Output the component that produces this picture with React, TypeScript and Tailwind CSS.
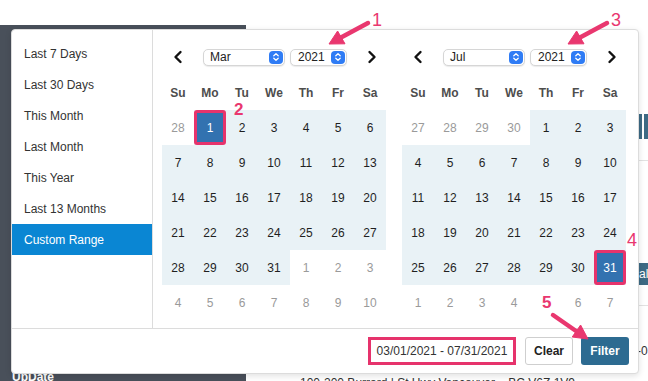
import React from 'react';

type Day = { d: number; off?: boolean; sel?: boolean };

const range = (a: number, b: number) => Array.from({ length: b - a + 1 }, (_, i) => a + i);

const presets = ['Last 7 Days', 'Last 30 Days', 'This Month', 'Last Month', 'This Year', 'Last 13 Months', 'Custom Range'];
const weekdays = ['Su', 'Mo', 'Tu', 'We', 'Th', 'Fr', 'Sa'];

const march: Day[] = [
  ...[28].map((d) => ({ d, off: true })),
  ...range(1, 31).map((d) => ({ d, sel: d === 1 })),
  ...range(1, 10).map((d) => ({ d, off: true })),
];

const july: Day[] = [
  ...range(27, 30).map((d) => ({ d, off: true })),
  ...range(1, 31).map((d) => ({ d, sel: d === 31 })),
  ...range(1, 7).map((d) => ({ d, off: true })),
];

const Chevron = ({ dir }: { dir: 'l' | 'r' }) => (
  <svg width="10" height="14" viewBox="0 0 10 14">
    <path
      d={dir === 'l' ? 'M7.5 2 L2.5 7 L7.5 12' : 'M2.5 2 L7.5 7 L2.5 12'}
      fill="none"
      stroke="#111"
      strokeWidth="2.4"
      strokeLinecap="round"
      strokeLinejoin="round"
    />
  </svg>
);

const Select = ({ value, w, pl }: { value: string; w: string; pl: string }) => (
  <div className={`${w} ${pl} h-[17px] flex items-center justify-between pr-[1px] bg-white border border-[#d6d6d6] rounded-[5px] shadow-[0_1px_1px_rgba(0,0,0,0.08)]`}>
    <span className="text-[12px] text-[#222] leading-none">{value}</span>
    <span className="w-[14px] h-[13px] rounded-[4px] bg-[#2f7cf5] flex items-center justify-center">
      <svg width="8" height="10" viewBox="0 0 8 10">
        <path d="M1.8 3.8 L4 1.8 L6.2 3.8 M1.8 6.2 L4 8.2 L6.2 6.2" fill="none" stroke="#fff" strokeWidth="1.3" strokeLinecap="round" strokeLinejoin="round" />
      </svg>
    </span>
  </div>
);

const Calendar = ({ month, days }: { month: string; days: Day[] }) => (
  <div className="w-[224px]">
    <div className="h-[24px] flex items-center">
      <div className="w-[32px] flex justify-center"><Chevron dir="l" /></div>
      <div className="ml-[9px]"><Select value={month} w="w-[82px]" pl="pl-[6px]" /></div>
      <div className="ml-[5px]"><Select value="2021" w="w-[57px]" pl="pl-[7px]" /></div>
      <div className="flex-1" />
      <div className="w-[28px] flex justify-center"><Chevron dir="r" /></div>
    </div>
    <div className="mt-[6px] grid grid-cols-7">
      {weekdays.map((w) => (
        <div key={w} className="h-[35px] flex items-center justify-center text-[12px] font-bold text-[#4d4d4d]">{w}</div>
      ))}
      {days.map((day, i) => (
        <div
          key={i}
          className={`h-[35px] flex items-center justify-center text-[12px] ${day.off ? 'text-[#9a9a9a]' : 'text-[#1f1f1f] bg-[#e9f2f6]'}`}
        >
          {day.sel ? (
            <div className="w-full h-full flex items-center justify-center bg-[#3272b0] border-[3px] border-[#e6336c] rounded-[3px] text-white">{day.d}</div>
          ) : (
            day.d
          )}
        </div>
      ))}
    </div>
  </div>
);

export default function App() {
  return (
    <div className="relative w-[648px] h-[381px] overflow-hidden bg-white font-['Liberation_Sans',Arial,sans-serif]">
      {/* page behind the popup */}
      <div className="absolute left-0 top-[25px] w-[246px] bottom-0 bg-[#49505a]" />
      <div className="absolute left-[12px] top-[371px] text-[12px] font-bold text-white leading-none">UpDate</div>
      <div className="absolute left-[639px] top-[114px] flex gap-[2px]">
        <div className="w-[3px] h-[25px] bg-[#3d6a84]" />
        <div className="w-[4px] h-[25px] bg-[#3d6a84]" />
      </div>
      <div className="absolute left-[638px] top-[160px] w-[10px] h-px bg-[#e2e2e2]" />
      <div className="absolute left-[638px] top-[263px] w-[12px] h-[22px] bg-[#3d6a84] text-white text-[12px] leading-[22px] pl-[1px]">al</div>
      <div className="absolute left-[638px] top-[305px] w-[10px] h-px bg-[#e2e2e2]" />
      <div className="absolute left-[637px] top-[342px] text-[12px] text-[#333]">-0</div>
      <div className="absolute left-[300px] top-[374px] text-[12px] text-[#333] whitespace-nowrap">100-200 Burrard | St Hwy Vancouver&nbsp;&nbsp;&nbsp;&nbsp;BC V6Z 1V9</div>

      {/* date range popup */}
      <div className="absolute left-[11px] top-[29px] w-[628px] bg-white border border-[#dcdcdc] rounded-[4px] shadow-[0_2px_6px_rgba(0,0,0,0.12)]">
        <div className="flex">
          <div className="w-[141px] border-r border-[#dcdcdc] pt-[8px]">
            {presets.map((p) => (
              <div
                key={p}
                className={`h-[31px] flex items-center pl-[12px] text-[12px] ${p === 'Custom Range' ? 'bg-[#0a86d3] text-white' : 'text-[#333]'}`}
              >
                {p}
              </div>
            ))}
          </div>
          <div className="flex gap-[16px] pl-[9px] pt-[15px] pb-[8px]">
            <Calendar month="Mar" days={march} />
            <Calendar month="Jul" days={july} />
          </div>
        </div>
        <div className="h-[45px] border-t border-[#dcdcdc] flex items-center justify-end pr-[9px] gap-[8px]">
          <div className="w-[148px] h-[28px] border-[3px] border-[#e6336c] bg-white flex items-center justify-center text-[12px] text-[#333]">
            03/01/2021 - 07/31/2021
          </div>
          <div className="ml-[1px] w-[48px] h-[28px] border border-[#cfcfcf] rounded-[3px] bg-white flex items-center justify-center text-[12px] font-bold text-[#222]">
            Clear
          </div>
          <div className="w-[48px] h-[28px] rounded-[3px] bg-[#2d6b91] flex items-center justify-center text-[12px] font-bold text-white">
            Filter
          </div>
        </div>
      </div>

      {/* annotations */}
      <svg className="absolute inset-0 pointer-events-none" width="648" height="381" viewBox="0 0 648 381">
        <g fill="#e9376f" stroke="#e9376f">
          <line x1="368" y1="23" x2="341" y2="37.5" strokeWidth="4.5" strokeLinecap="round" />
          <polygon points="329,44 345,43.8 337.6,31" strokeWidth="1" strokeLinejoin="round" />
          <g transform="translate(239,0)">
            <line x1="368" y1="23" x2="341" y2="37.5" strokeWidth="4.5" strokeLinecap="round" />
            <polygon points="329,44 345,43.8 337.6,31" strokeWidth="1" strokeLinejoin="round" />
          </g>
          <line x1="553" y1="315" x2="576" y2="331" strokeWidth="4.5" strokeLinecap="round" />
          <polygon points="588,339 572.2,337 580.6,325" strokeWidth="1" strokeLinejoin="round" />
        </g>
      </svg>
      <span className="absolute left-[372px] top-[11px] text-[18px] leading-none text-[#e9376f]">1</span>
      <span className="absolute left-[611px] top-[11px] text-[18px] leading-none text-[#e9376f]">3</span>
      <span className="absolute left-[234px] top-[101px] text-[17px] font-bold leading-none text-[#e9376f]">2</span>
      <span className="absolute left-[627px] top-[231px] text-[18px] leading-none text-[#e9376f]">4</span>
      <span className="absolute left-[539px] top-[294px] px-[3px] bg-white text-[17px] font-bold leading-none text-[#e9376f]">5</span>
    </div>
  );
}
